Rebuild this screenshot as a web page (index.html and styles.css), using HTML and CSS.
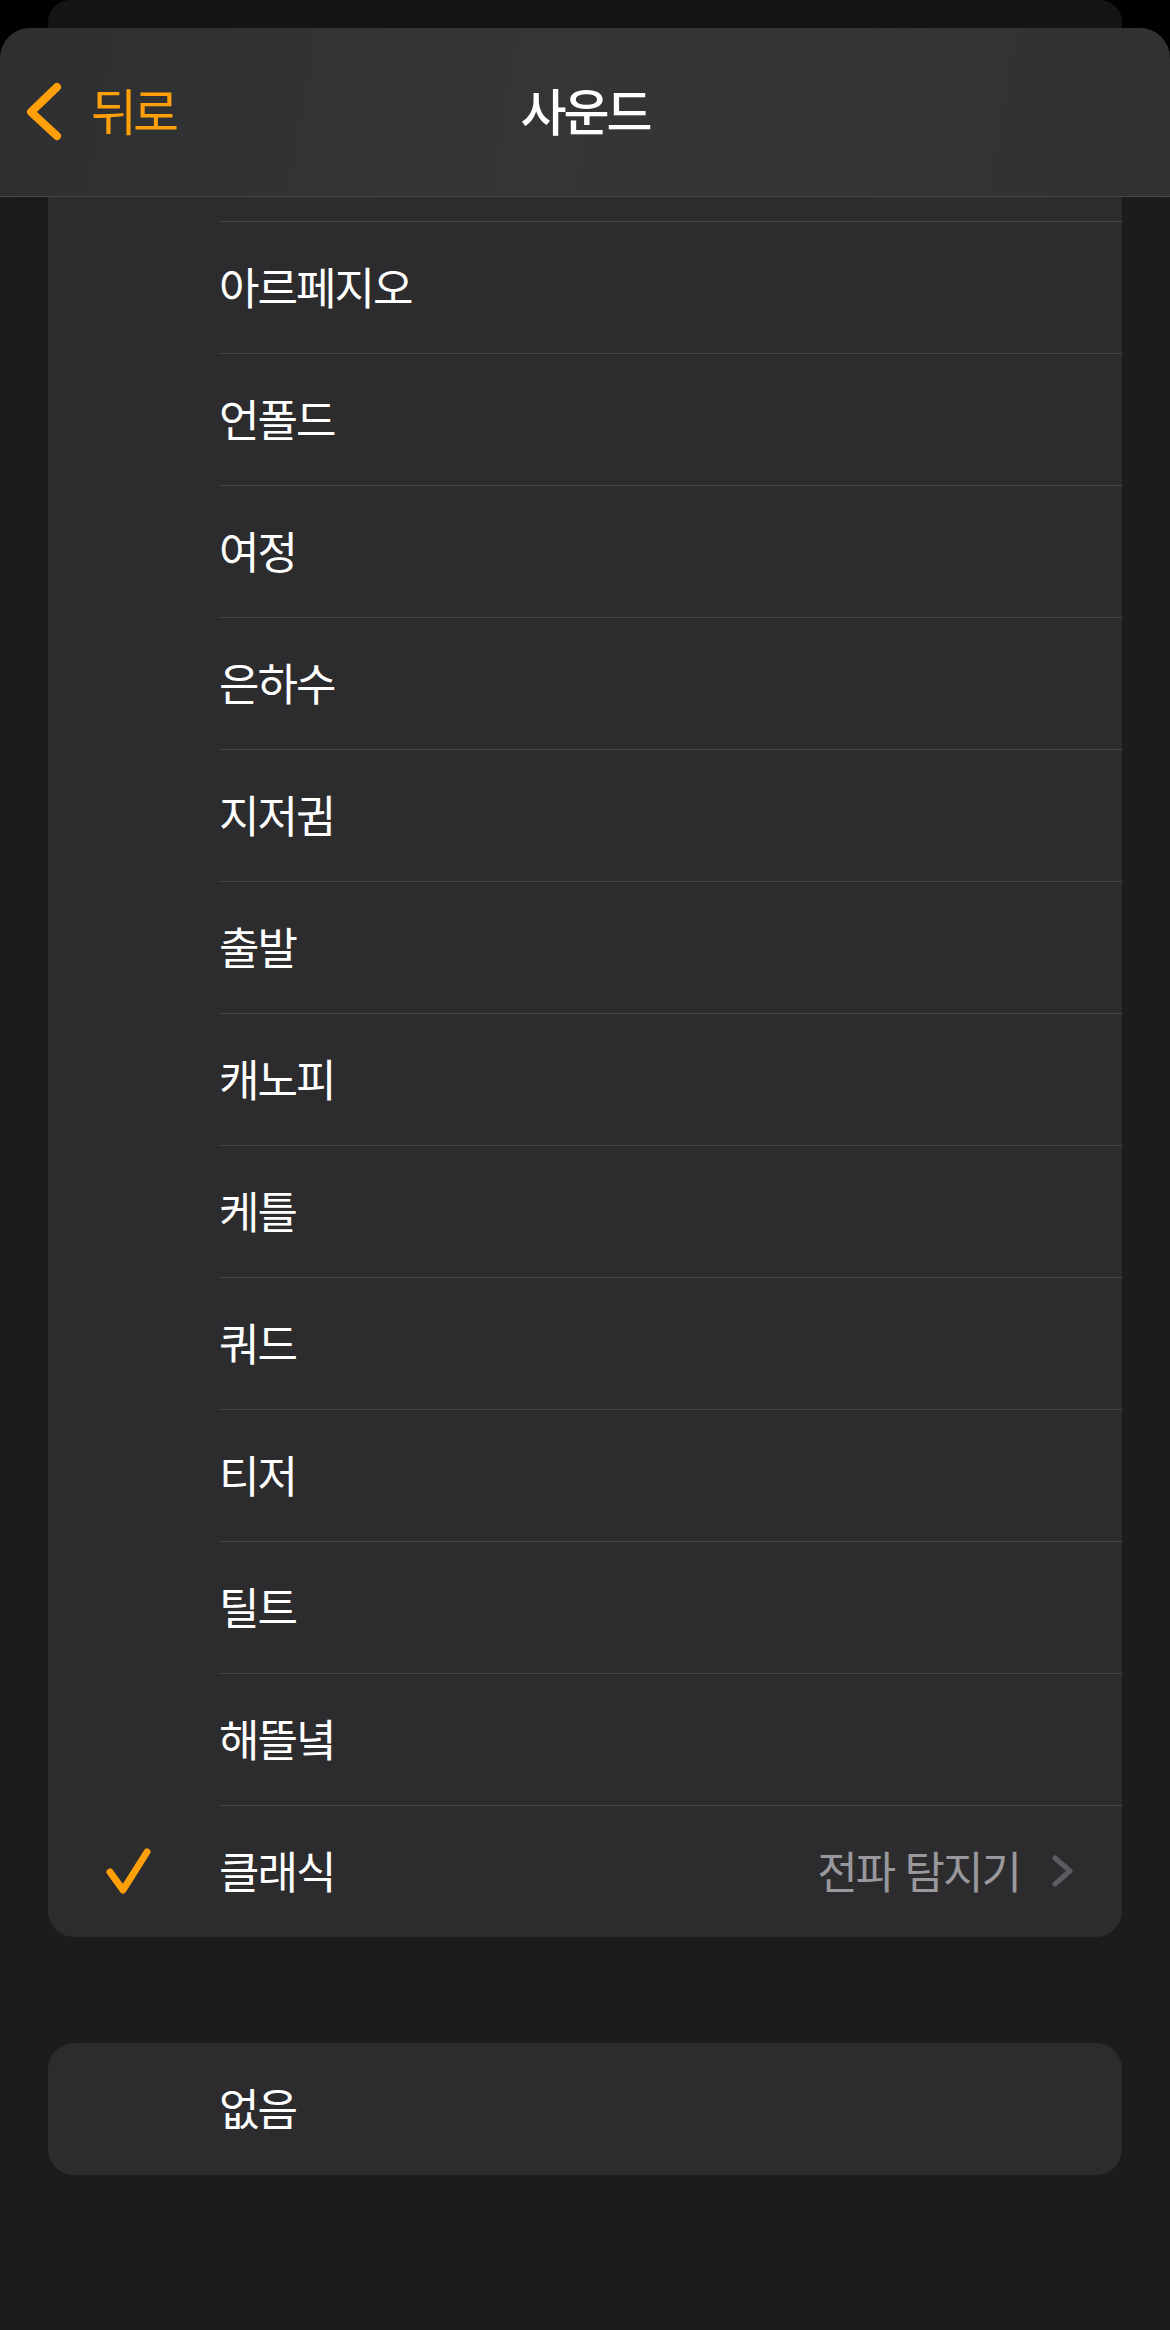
FILE: index.html
```html
<!DOCTYPE html>
<html lang="ko">
<head>
<meta charset="utf-8">
<title>사운드</title>
<link rel="stylesheet" href="styles.css">
</head>
<body>
<div class="top">
  <div class="backcard"></div>
  <header class="header">
    <div class="back">
      <svg class="back-chev" width="40" height="64" viewBox="0 0 40 64"><path d="M33 7 L7 32 L33 56" fill="none" stroke="#ff9f0a" stroke-width="8" stroke-linecap="round" stroke-linejoin="round"/></svg>
      <span class="back-label">뒤로</span>
    </div>
    <h1 class="title">사운드</h1>
    <div class="spacer"></div>
  </header>
</div>

<section class="card card-list">
  <div class="stub"></div>
  <div class="row"><div class="mark"></div><div class="cell"><span class="label">아르페지오</span></div></div>
  <div class="row"><div class="mark"></div><div class="cell"><span class="label">언폴드</span></div></div>
  <div class="row"><div class="mark"></div><div class="cell"><span class="label">여정</span></div></div>
  <div class="row"><div class="mark"></div><div class="cell"><span class="label">은하수</span></div></div>
  <div class="row"><div class="mark"></div><div class="cell"><span class="label">지저귐</span></div></div>
  <div class="row"><div class="mark"></div><div class="cell"><span class="label">출발</span></div></div>
  <div class="row"><div class="mark"></div><div class="cell"><span class="label">캐노피</span></div></div>
  <div class="row"><div class="mark"></div><div class="cell"><span class="label">케틀</span></div></div>
  <div class="row"><div class="mark"></div><div class="cell"><span class="label">쿼드</span></div></div>
  <div class="row"><div class="mark"></div><div class="cell"><span class="label">티저</span></div></div>
  <div class="row"><div class="mark"></div><div class="cell"><span class="label">틸트</span></div></div>
  <div class="row"><div class="mark"></div><div class="cell"><span class="label">해뜰녘</span></div></div>
  <div class="row">
    <div class="mark">
      <svg class="check" width="48" height="48" viewBox="0 0 48 48"><path d="M5 25 L18 43 L42 5" fill="none" stroke="#ff9f0a" stroke-width="7" stroke-linecap="round" stroke-linejoin="round"/></svg>
    </div>
    <div class="cell">
      <span class="label">클래식</span>
      <span class="detail">전파 탐지기</span>
      <svg class="disclosure" width="24" height="34" viewBox="0 0 24 34"><path d="M5 3 L20 16 L5 29" fill="none" stroke="#5c5c60" stroke-width="5" stroke-linecap="round" stroke-linejoin="round"/></svg>
    </div>
  </div>
</section>

<section class="card card-single">
  <div class="row row-plain"><div class="mark"></div><div class="cell"><span class="label">없음</span></div></div>
</section>
</body>
</html>
```

FILE: styles.css
```css
* { box-sizing: border-box; }

html, body {
  margin: 0;
  padding: 0;
}

body {
  width: 1170px;
  min-height: 2330px;
  background: #1c1c1e;
  font-family: "Noto Sans CJK KR", "Noto Sans", sans-serif;
  color: #ffffff;
}

.top {
  background: #000000;
}

.backcard {
  height: 28px;
  margin: 0 48px;
  background: #141414;
  border-radius: 22px 22px 0 0;
}

.header {
  height: 169px;
  display: grid;
  grid-template-columns: 1fr auto 1fr;
  align-items: center;
  padding: 0 24px;
  background: linear-gradient(100deg, #2e2f30 0%, #343536 45%, #333435 70%, #303132 100%);
  border-radius: 30px 30px 0 0;
  border-bottom: 1px solid #48484a;
}

.back {
  display: flex;
  align-items: center;
  color: #ff9f0a;
}

.back-chev {
  display: block;
  flex: none;
}

.back-label {
  margin-left: 27px;
  margin-bottom: 6px;
  font-size: 50px;
  line-height: 1;
  letter-spacing: -4px;
}

.title {
  margin: 0 0 6px;
  font-size: 50px;
  font-weight: 500;
  line-height: 1;
  letter-spacing: -3px;
  color: #ffffff;
}

.card {
  margin: 0 48px;
  background: #2c2c2e;
  overflow: hidden;
}

.card-list {
  border-radius: 0 0 26px 26px;
}

.card-single {
  margin-top: 106px;
  border-radius: 26px;
}

.stub {
  height: 24px;
}

.row {
  display: flex;
  height: 132px;
}

.mark {
  width: 171px;
  flex: none;
  display: flex;
  align-items: center;
  padding-left: 57px;
}

.check {
  display: block;
}

.cell {
  flex: 1;
  display: flex;
  align-items: center;
  border-top: 1px solid #464648;
  padding-right: 48px;
}

.row-plain .cell {
  border-top: none;
}

.label {
  margin-bottom: 4px;
  font-size: 44px;
  line-height: 1;
  letter-spacing: -2px;
  color: #ffffff;
}

.detail {
  margin-left: auto;
  margin-bottom: 4px;
  font-size: 44px;
  line-height: 1;
  letter-spacing: -2px;
  color: #98989d;
}

.disclosure {
  display: block;
  margin-left: 30px;
  flex: none;
}
```
